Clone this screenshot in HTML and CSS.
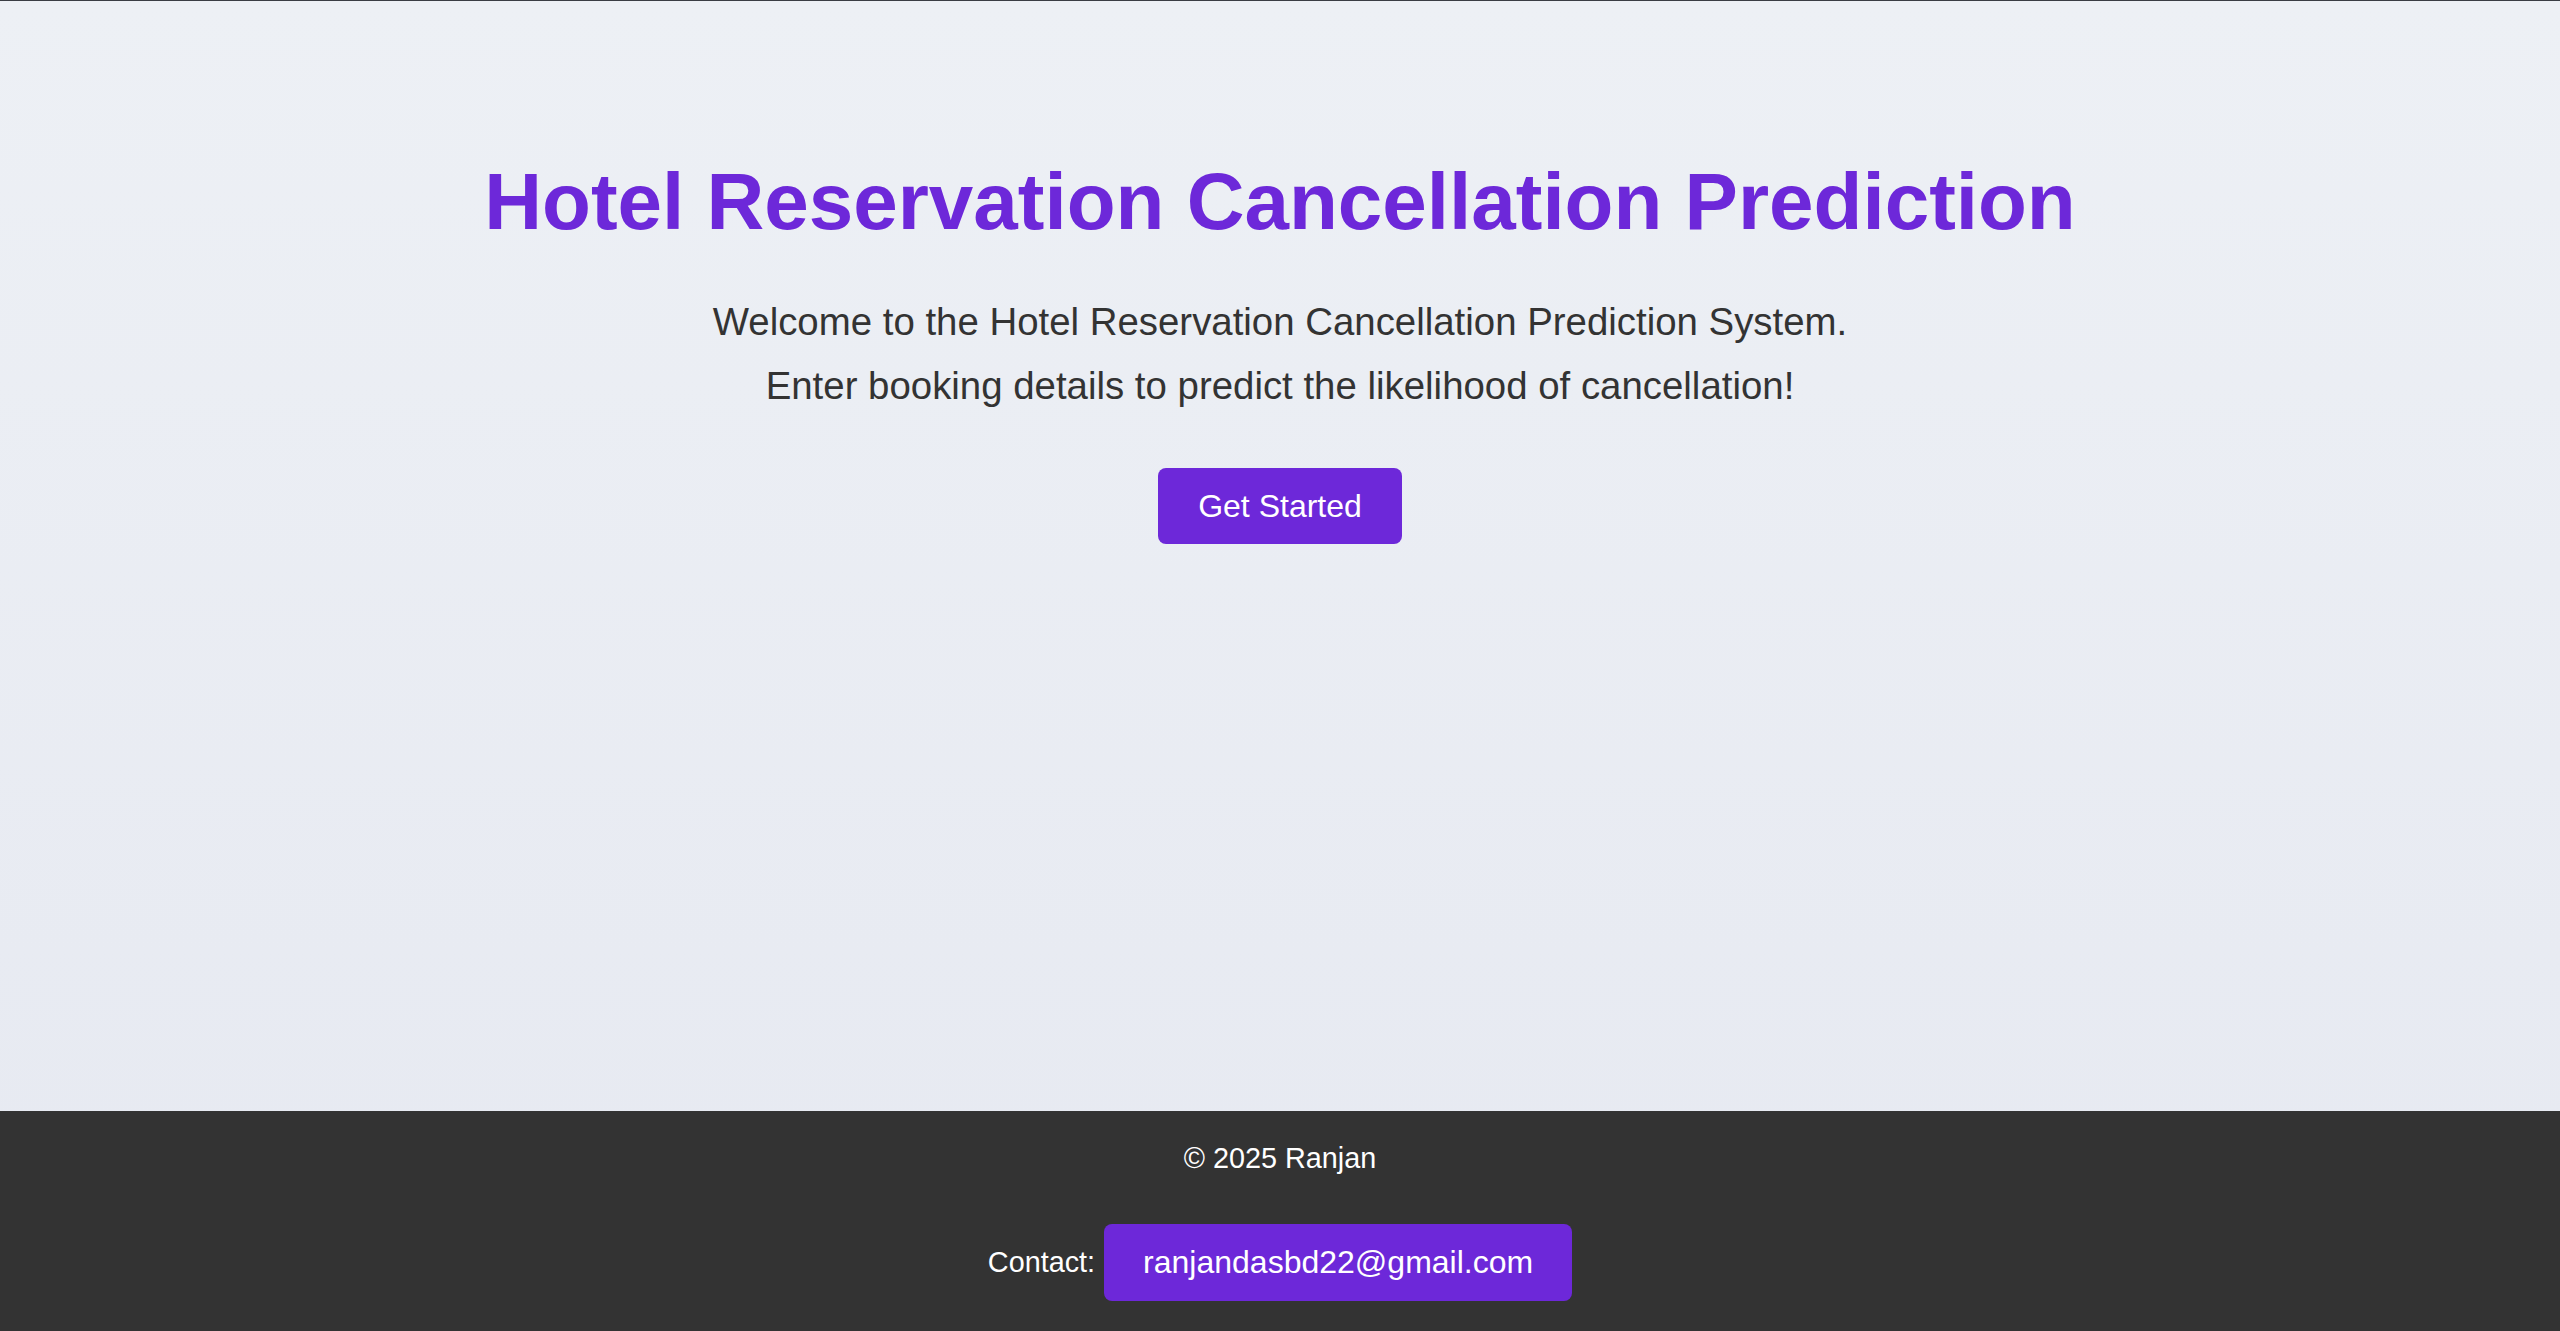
FILE: index.html
```html
<!DOCTYPE html>
<html lang="en">
<head>
<meta charset="utf-8">
<title>Hotel Reservation Cancellation Prediction</title>
<link rel="stylesheet" href="styles.css">
</head>
<body>
<div class="page">
  <main class="hero">
    <h1 class="hero-title">Hotel Reservation Cancellation Prediction</h1>
    <p class="hero-text">Welcome to the Hotel Reservation Cancellation Prediction System.<br>Enter booking details to predict the likelihood of cancellation!</p>
    <a class="btn btn-start" href="#">Get Started</a>
  </main>
  <footer class="footer">
    <p class="footer-copy">© 2025 Ranjan</p>
    <div class="footer-contact">
      <span class="contact-label">Contact:</span>
      <a class="btn btn-mail" href="#">ranjandasbd22@gmail.com</a>
    </div>
  </footer>
</div>
</body>
</html>
```

FILE: styles.css
```css
* { box-sizing: border-box; }
html, body { margin: 0; padding: 0; height: 100%; }
body {
  font-family: "Liberation Sans", Arial, sans-serif;
  color: #333;
  border-top: 1px solid #3a3d44;
}
.page {
  min-height: 1330px;
  display: flex;
  flex-direction: column;
  background: linear-gradient(180deg, #edf0f5 0%, #e6e9f1 100%);
}
.hero {
  flex: 1;
  display: flex;
  flex-direction: column;
  align-items: center;
  text-align: center;
  padding-top: 155px;
}
.hero-title {
  margin: 0;
  font-size: 80px;
  font-weight: 700;
  line-height: 92px;
  color: #6d28d9;
}
.hero-text {
  margin: 42px 0 0;
  font-size: 38.4px;
  line-height: 64px;
  color: #333;
}
.btn {
  display: inline-block;
  background: #6d28d9;
  color: #fff;
  text-decoration: none;
  border-radius: 8px;
}
.btn-start {
  margin-top: 50px;
  width: 244px;
  height: 76px;
  line-height: 76px;
  font-size: 32px;
  text-align: center;
}
.footer {
  background: #333;
  color: #fff;
  height: 220px;
  padding-top: 31px;
  display: flex;
  flex-direction: column;
  align-items: center;
}
.footer-copy {
  margin: 0;
  font-size: 28.8px;
  line-height: 33px;
}
.footer-contact {
  margin-top: 49px;
  display: flex;
  align-items: center;
  gap: 9px;
}
.contact-label {
  font-size: 28.8px;
  line-height: 33px;
}
.btn-mail {
  font-size: 32px;
  line-height: 37px;
  padding: 20px 39px;
}
```
